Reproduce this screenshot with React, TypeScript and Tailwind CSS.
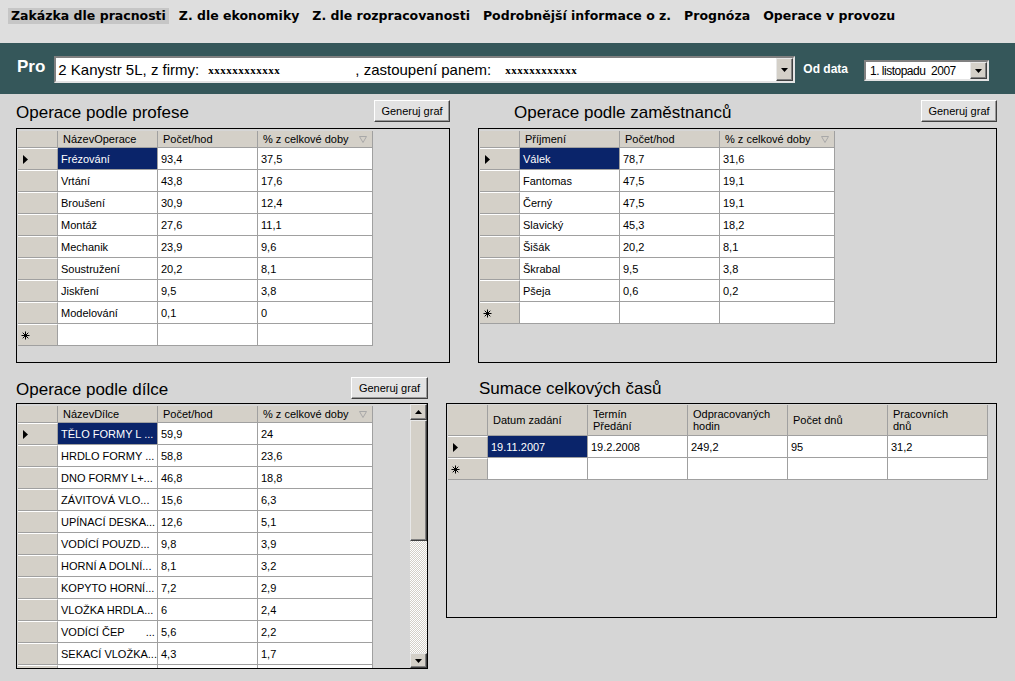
import React from 'react';

type Col = { label: React.ReactNode; w: string; sort?: boolean };

const navItems = [
  'Zakázka dle pracnosti',
  'Z. dle ekonomiky',
  'Z. dle rozpracovanosti',
  'Podrobnější informace o z.',
  'Prognóza',
  'Operace v provozu',
];

const profeseCols: Col[] = [
  { label: 'NázevOperace', w: 'w-[100px]' },
  { label: 'Počet/hod', w: 'w-[100px]' },
  { label: '% z celkové doby', w: 'w-[115px]', sort: true },
];

const profeseRows = [
  ['Frézování', '93,4', '37,5'],
  ['Vrtání', '43,8', '17,6'],
  ['Broušení', '30,9', '12,4'],
  ['Montáž', '27,6', '11,1'],
  ['Mechanik', '23,9', '9,6'],
  ['Soustružení', '20,2', '8,1'],
  ['Jiskření', '9,5', '3,8'],
  ['Modelování', '0,1', '0'],
];

const zamCols: Col[] = [
  { label: 'Příjmení', w: 'w-[100px]' },
  { label: 'Počet/hod', w: 'w-[100px]' },
  { label: '% z celkové doby', w: 'w-[115px]', sort: true },
];

const zamRows = [
  ['Válek', '78,7', '31,6'],
  ['Fantomas', '47,5', '19,1'],
  ['Černý', '47,5', '19,1'],
  ['Slavický', '45,3', '18,2'],
  ['Šišák', '20,2', '8,1'],
  ['Škrabal', '9,5', '3,8'],
  ['Pšeja', '0,6', '0,2'],
];

const dilceCols: Col[] = [
  { label: 'NázevDílce', w: 'w-[100px]' },
  { label: 'Počet/hod', w: 'w-[100px]' },
  { label: '% z celkové doby', w: 'w-[115px]', sort: true },
];

const dilceRows = [
  ['TĚLO FORMY L ...', '59,9', '24'],
  ['HRDLO FORMY ...', '58,8', '23,6'],
  ['DNO FORMY L+...', '46,8', '18,8'],
  ['ZÁVITOVÁ VLO...', '15,6', '6,3'],
  ['UPÍNACÍ DESKA...', '12,6', '5,1'],
  ['VODÍCÍ POUZD...', '9,8', '3,9'],
  ['HORNÍ A DOLNÍ...', '8,1', '3,2'],
  ['KOPYTO HORNÍ...', '7,2', '2,9'],
  ['VLOŽKA HRDLA...', '6', '2,4'],
  ['VODÍCÍ ČEP       ...', '5,6', '2,2'],
  ['SEKACÍ VLOŽKA...', '4,3', '1,7'],
  ['', '', ''],
];

const sumCols: Col[] = [
  { label: 'Datum zadání', w: 'w-[100px]' },
  { label: <>Termín<br />Předání</>, w: 'w-[100px]' },
  { label: <>Odpracovaných<br />hodin</>, w: 'w-[100px]' },
  { label: 'Počet dnů', w: 'w-[100px]' },
  { label: <>Pracovních<br />dnů</>, w: 'w-[100px]' },
];

const sumRows = [['19.11.2007', '19.2.2008', '249,2', '95', '31,2']];

const Arrow = () => (
  <svg width="5" height="9" viewBox="0 0 5 9">
    <path d="M0 0L5 4.5L0 9Z" fill="#000" />
  </svg>
);

const Star = () => (
  <svg width="9" height="9" viewBox="0 0 9 9" stroke="#000" strokeWidth="1">
    <path d="M4.5 0.5V8.5M0.5 4.5H8.5M1.7 1.7L7.3 7.3M7.3 1.7L1.7 7.3" />
  </svg>
);

const SortGlyph = () => (
  <svg width="8" height="7" viewBox="0 0 8 7">
    <path d="M0.5 0.5H7.5L4 6.5Z" fill="none" stroke="#a8a8a8" />
  </svg>
);

const DownTri = () => (
  <svg width="7" height="4" viewBox="0 0 7 4">
    <path d="M0 0H7L3.5 4Z" fill="#000" />
  </svg>
);

const UpTri = () => (
  <svg width="7" height="4" viewBox="0 0 7 4">
    <path d="M0 4H7L3.5 0Z" fill="#000" />
  </svg>
);

const DropButton = () => (
  <div className="w-[17px] h-full bg-[#d4d0c8] border border-t-[#e8e8e8] border-l-[#e8e8e8] border-r-[#404040] border-b-[#404040] shadow-[inset_-1px_-1px_0_#808080] flex items-center justify-center">
    <DownTri />
  </div>
);

function Grid({
  cols,
  rows,
  headerH = 'h-[17px]',
  newRow = true,
}: {
  cols: Col[];
  rows: string[][];
  headerH?: string;
  newRow?: boolean;
}) {
  return (
    <div className="flex flex-col text-[11px] leading-[12px]">
      <div className={`flex ${headerH}`}>
        <div className="w-[40px] h-full bg-[#d4d0c8] border-r border-b border-[#a0a0a0]" />
        {cols.map((c, i) => (
          <div
            key={i}
            className={`${c.w} h-full bg-[#d4d0c8] border-r border-b border-[#a0a0a0] pl-[5px] pr-[5px] flex items-center justify-between`}
          >
            <span>{c.label}</span>
            {c.sort && <SortGlyph />}
          </div>
        ))}
      </div>
      {rows.map((r, i) => (
        <div key={i} className="flex h-[22px]">
          <div className="w-[40px] h-full bg-[#d4d0c8] border-r border-b border-[#a0a0a0] border-t border-t-white pl-[5px] flex items-center">
            {i === 0 && <Arrow />}
          </div>
          {r.map((v, j) => (
            <div
              key={j}
              className={`${cols[j].w} h-full border-r border-b border-[#a0a0a0] pl-[3px] flex items-center whitespace-pre ${
                i === 0 && j === 0 ? 'bg-[#0a246a] text-white' : 'bg-white'
              }`}
            >
              {v}
            </div>
          ))}
        </div>
      ))}
      {newRow && (
        <div className="flex h-[22px]">
          <div className="w-[40px] h-full bg-[#d4d0c8] border-r border-b border-[#a0a0a0] border-t border-t-white pl-[3px] flex items-center">
            <Star />
          </div>
          {cols.map((c, j) => (
            <div key={j} className={`${c.w} h-full bg-white border-r border-b border-[#a0a0a0]`} />
          ))}
        </div>
      )}
    </div>
  );
}

const GraphButton = ({ w }: { w: string }) => (
  <button
    className={`${w} h-[22px] text-[11px] bg-[#e2e2e2] border border-t-white border-l-white border-r-[#404040] border-b-[#404040] shadow-[inset_-1px_-1px_0_#9a9a9a] flex items-center justify-center`}
  >
    Generuj graf
  </button>
);

const Mask = () => (
  <span className="font-['Liberation_Serif',serif] text-[11px] tracking-[0.5px] font-bold">xxxxxxxxxxxx</span>
);

export default function App() {
  return (
    <div className="w-[1015px] h-[681px] overflow-hidden bg-[#d6d6d6] text-black font-['Liberation_Sans',Arial,sans-serif]">
      {/* menu */}
      <div className="h-[43px] bg-[#dedede] flex items-start gap-[7px] pl-[8px] pt-[8px] font-['DejaVu_Sans',sans-serif] font-bold text-[12.5px]">
        {navItems.map((n, i) => (
          <span key={n} className={`h-[16px] leading-[16px] px-[3px] ${i === 0 ? 'bg-[#c6c6c6]' : ''}`}>
            {n}
          </span>
        ))}
      </div>

      {/* filter bar */}
      <div className="h-[51px] bg-[#35575a] flex items-start">
        <span className="ml-[17px] mt-[14px] text-[17px] leading-[20px] font-bold text-white">Pro</span>
        <div className="ml-[9px] mt-[13px] w-[741px] h-[27px] bg-white border-2 border-t-[#808080] border-l-[#808080] border-r-[#e4e4e4] border-b-[#e4e4e4] flex items-stretch">
          <div className="flex-1 flex items-center pl-[2px] text-[15px] leading-[18px] whitespace-pre">
            <span className="w-[150px]">2 Kanystr 5L, z firmy:</span>
            <span className="w-[147px]"><Mask /></span>
            <span className="w-[150px]">, zastoupení panem:</span>
            <Mask />
          </div>
          <DropButton />
        </div>
        <span className="ml-[8px] mt-[19px] text-[12px] leading-[15px] font-bold text-white">Od data</span>
        <div className="ml-[16px] mt-[17px] w-[125px] h-[21px] bg-white border-2 border-t-[#808080] border-l-[#808080] border-r-[#e4e4e4] border-b-[#e4e4e4] flex items-stretch">
          <div className="flex-1 flex items-center pl-[4px] text-[12px] tracking-[-0.5px] whitespace-pre">1. listopadu  2007</div>
          <DropButton />
        </div>
      </div>

      {/* content */}
      <div className="pt-[6px]">
        <div className="flex pl-[16px] gap-[28px]">
          <div className="w-[434px] flex flex-col">
            <div className="h-[28px] flex items-start justify-between">
              <span className="mt-[3px] text-[17px] leading-[20px]">Operace podle profese</span>
              <GraphButton w="w-[76px]" />
            </div>
            <div className="h-[235px] border border-black pt-[2px] pl-px">
              <Grid cols={profeseCols} rows={profeseRows} />
            </div>
          </div>
          <div className="w-[519px] flex flex-col">
            <div className="h-[28px] flex items-start justify-between pl-[36px]">
              <span className="mt-[3px] text-[17px] leading-[20px]">Operace podle zaměstnanců</span>
              <GraphButton w="w-[76px]" />
            </div>
            <div className="h-[235px] border border-black pt-[2px] pl-px">
              <Grid cols={zamCols} rows={zamRows} />
            </div>
          </div>
        </div>

        <div className="flex pl-[16px] gap-[18px] mt-[14px]">
          <div className="w-[412px] flex flex-col">
            <div className="h-[26px] flex items-start justify-between">
              <span className="mt-[3px] text-[17px] leading-[20px]">Operace podle dílce</span>
              <GraphButton w="w-[77px]" />
            </div>
            <div className="h-[266px] border border-black flex overflow-hidden">
              <div className="pt-[2px] pl-px">
                <Grid cols={dilceCols} rows={dilceRows} newRow={false} />
              </div>
              <div className="flex-1" />
              <div className="w-[17px] h-full flex flex-col">
                <div className="h-[16px] bg-[#d4d0c8] border border-t-[#e8e8e8] border-l-[#e8e8e8] border-r-[#404040] border-b-[#404040] shadow-[inset_-1px_-1px_0_#808080] flex items-center justify-center">
                  <UpTri />
                </div>
                <div className="h-[121px] bg-[#d4d0c8] border border-t-[#e8e8e8] border-l-[#e8e8e8] border-r-[#404040] border-b-[#404040] shadow-[inset_-1px_-1px_0_#808080]" />
                <div className="flex-1 bg-[repeating-conic-gradient(#ffffff_0%_25%,#d4d0c8_0%_50%)] bg-[length:2px_2px]" />
                <div className="h-[15px] bg-[#d4d0c8] border border-t-[#e8e8e8] border-l-[#e8e8e8] border-r-[#404040] border-b-[#404040] shadow-[inset_-1px_-1px_0_#808080] flex items-center justify-center">
                  <DownTri />
                </div>
              </div>
            </div>
          </div>
          <div className="w-[551px] flex flex-col">
            <div className="h-[26px] pl-[33px]">
              <span className="text-[17px] leading-[20px]">Sumace celkových časů</span>
            </div>
            <div className="h-[215px] border border-black pt-px pl-px">
              <Grid cols={sumCols} rows={sumRows} headerH="h-[31px]" />
            </div>
          </div>
        </div>
      </div>
    </div>
  );
}
